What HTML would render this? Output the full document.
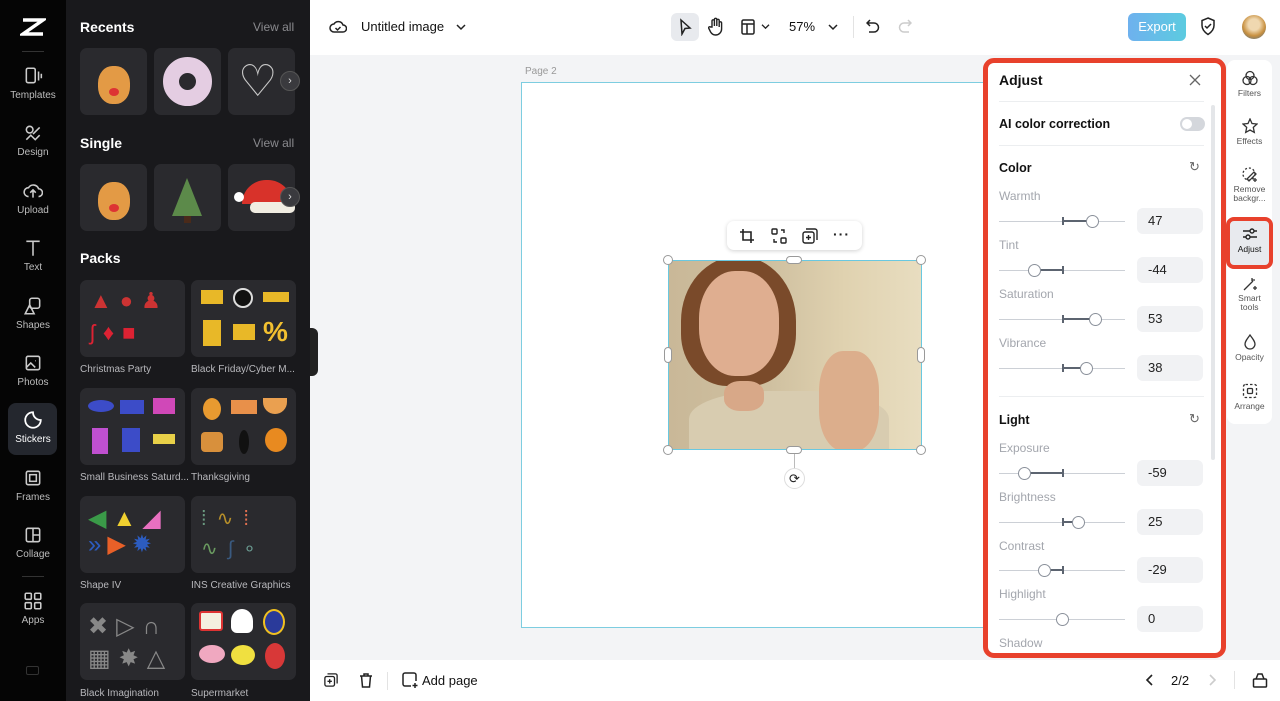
<!DOCTYPE html>
<html><head><meta charset="utf-8"><style>
*{box-sizing:border-box;margin:0;padding:0}
body{width:1280px;height:701px;overflow:hidden;font-family:"Liberation Sans",sans-serif;background:#f3f4f6;position:relative}
.a{position:absolute}
.nav{left:0;top:0;width:66px;height:701px;background:#050505}
.ni{position:absolute;left:0;width:66px;text-align:center;color:#bdbdbd;font-size:10px}
.ni svg{display:block;margin:0 auto 4px;width:20px;height:20px}
.panel{left:66px;top:0;width:244px;height:701px;background:#19191c}
.h{color:#fff;font-weight:bold;font-size:14px}
.va{color:#8a8a8e;font-size:12px}
.tile{position:absolute;background:#2a2a2e;border-radius:7px}
.pk{position:absolute;background:#2a2a2e;border-radius:7px;width:105px;height:77px}
.pl{position:absolute;color:#b8b8bc;font-size:10px}
.arr{position:absolute;width:20px;height:20px;border-radius:50%;background:#3a3a3e;border:1px solid #555;color:#ddd;font-size:11px;text-align:center;line-height:18px}
.top{left:310px;top:0;width:970px;height:55px;background:#fff}
.bot{left:310px;top:660px;width:970px;height:41px;background:#fff}
.lab{position:absolute;left:999px;color:#a3a6ad;font-size:12px}
.trk{position:absolute;left:999px;width:126px;height:1px;background:#ccd0d6}
.tk{position:absolute;left:1062px;width:1.5px;height:8px;background:#5c6470}
.fill{position:absolute;height:2px;background:#5c6470}
.th{position:absolute;width:13px;height:13px;border-radius:50%;background:#fff;border:1px solid #8a909a}
.vb{position:absolute;left:1137px;width:66px;height:26px;border-radius:6px;background:#f1f2f4;font-size:13px;color:#222;padding-left:11px;line-height:26px}
.sec{position:absolute;left:999px;font-size:12.5px;font-weight:bold;color:#111}
.rt{position:absolute;left:1227px;width:45px;text-align:center;font-size:8.5px;color:#555}
.rt svg{display:block;margin:0 auto 2px}
.hd{position:absolute;width:10px;height:10px;border-radius:50%;background:#fff;border:1px solid #999}
</style></head><body>

<div class="a nav">
 <svg class="a" style="left:20px;top:17px" width="26" height="20" viewBox="0 0 26 20"><path d="M3 3h20L3 17h20" stroke="#fff" stroke-width="3.5" fill="none"/></svg>
 <div class="a" style="left:22px;top:51px;width:22px;height:1px;background:#333"></div>
 <div class="ni" style="top:66px"><svg viewBox="0 0 18 18" fill="none" stroke="#ccc" stroke-width="1.4"><rect x="3" y="2" width="8" height="13" rx="1.5"/><path d="M14 5v8M16.5 7v4"/></svg>Templates</div>
 <div class="ni" style="top:123px"><svg viewBox="0 0 18 18" fill="none" stroke="#ccc" stroke-width="1.4"><circle cx="6" cy="6" r="3"/><path d="M9 10l6-6M3 15l4-4 4 4 4-4"/></svg>Design</div>
 <div class="ni" style="top:181px"><svg viewBox="0 0 18 18" fill="none" stroke="#ccc" stroke-width="1.4"><path d="M5 14a4 4 0 010-8 5 5 0 019 1 3.5 3.5 0 010 7M9 15V8M6.5 10.5L9 8l2.5 2.5"/></svg>Upload</div>
 <div class="ni" style="top:238px"><svg viewBox="0 0 18 18" fill="none" stroke="#ccc" stroke-width="1.4"><path d="M3 3h12M9 3v13"/></svg>Text</div>
 <div class="ni" style="top:296px"><svg viewBox="0 0 18 18" fill="none" stroke="#ccc" stroke-width="1.4"><rect x="6" y="2" width="9" height="9" rx="2"/><path d="M6 8l-4 8h8z"/></svg>Shapes</div>
 <div class="ni" style="top:353px"><svg viewBox="0 0 18 18" fill="none" stroke="#ccc" stroke-width="1.4"><rect x="3" y="3" width="12" height="12" rx="1.5"/><path d="M3 13l4-4 4 4M11 7h.5"/></svg>Photos</div>
 <div class="a" style="left:8px;top:403px;width:49px;height:52px;border-radius:8px;background:#24272e"></div>
 <div class="ni" style="top:410px;color:#fff"><svg viewBox="0 0 18 18" fill="none" stroke="#fff" stroke-width="1.6"><path d="M16 9a7 7 0 11-7-7c0 4 3 7 7 7z"/></svg>Stickers</div>
 <div class="ni" style="top:468px"><svg viewBox="0 0 18 18" fill="none" stroke="#ccc" stroke-width="1.4"><rect x="3" y="3" width="12" height="12" rx="1.5"/><rect x="6" y="6" width="6" height="6"/></svg>Frames</div>
 <div class="ni" style="top:525px"><svg viewBox="0 0 18 18" fill="none" stroke="#ccc" stroke-width="1.4"><rect x="3" y="3" width="12" height="12" rx="1.5"/><path d="M9 3v12M9 9h6"/></svg>Collage</div>
 <div class="a" style="left:22px;top:576px;width:22px;height:1px;background:#333"></div>
 <div class="ni" style="top:591px"><svg viewBox="0 0 18 18" fill="none" stroke="#ccc" stroke-width="1.4"><rect x="2" y="2" width="5.5" height="5.5" rx="1"/><rect x="10.5" y="2" width="5.5" height="5.5" rx="1"/><rect x="2" y="10.5" width="5.5" height="5.5" rx="1"/><rect x="10.5" y="10.5" width="5.5" height="5.5" rx="1"/></svg>Apps</div>
 <div class="a" style="left:26px;top:666px;width:13px;height:9px;border:1px solid #333;border-radius:2px"></div>
</div>

<div class="a panel">
 <div class="a h" style="left:14px;top:19px">Recents</div><div class="a va" style="left:187px;top:20px">View all</div>
 <div class="tile" style="left:14px;top:48px;width:67px;height:67px"><div style="position:absolute;left:18px;top:18px;width:32px;height:38px;border-radius:45%;background:#e39a45"></div><div style="position:absolute;left:29px;top:40px;width:10px;height:8px;border-radius:50%;background:#d33"></div></div>
 <div class="tile" style="left:88px;top:48px;width:67px;height:67px"><div style="position:absolute;left:9px;top:9px;width:49px;height:49px;border-radius:50%;border:16px solid #e4cde2"></div></div>
 <div class="tile" style="left:162px;top:48px;width:67px;height:67px;overflow:hidden"><div style="position:absolute;left:10px;top:12px;font-size:44px;color:#c8c8c8;line-height:44px">♡</div></div>
 <div class="arr" style="left:214px;top:71px">›</div>
 <div class="a h" style="left:14px;top:135px">Single</div><div class="a va" style="left:187px;top:136px">View all</div>
 <div class="tile" style="left:14px;top:164px;width:67px;height:67px"><div style="position:absolute;left:18px;top:18px;width:32px;height:38px;border-radius:45%;background:#e39a45"></div><div style="position:absolute;left:29px;top:40px;width:10px;height:8px;border-radius:50%;background:#d33"></div></div>
 <div class="tile" style="left:88px;top:164px;width:67px;height:67px"><div style="position:absolute;left:18px;top:14px;width:0;height:0;border-left:15px solid transparent;border-right:15px solid transparent;border-bottom:38px solid #5c8a4a"></div><div style="position:absolute;left:30px;top:52px;width:7px;height:7px;background:#4a2a1a"></div></div>
 <div class="tile" style="left:162px;top:164px;width:67px;height:67px;overflow:hidden"><div style="position:absolute;left:14px;top:16px;width:50px;height:24px;border-radius:25px 25px 0 0;background:#d8322a"></div><div style="position:absolute;left:22px;top:38px;width:45px;height:11px;border-radius:5px;background:#f1ede2"></div><div style="position:absolute;left:6px;top:28px;width:10px;height:10px;border-radius:50%;background:#fff"></div></div>
 <div class="arr" style="left:214px;top:187px">›</div>
 <div class="a h" style="left:14px;top:250px">Packs</div>
 <div class="pk" style="left:14px;top:280px"><div style="position:absolute;left:10px;top:8px;font-size:22px;letter-spacing:8px;color:#c33">▲●♟</div><div style="position:absolute;left:10px;top:40px;font-size:22px;letter-spacing:8px;color:#d23">ʃ♦■</div></div>
 <div class="pl" style="left:14px;top:364px">Christmas Party</div>
 <div class="pk" style="left:125px;top:280px"><div style="position:absolute;left:10px;top:10px;width:22px;height:14px;background:#e8b828"></div><div style="position:absolute;left:42px;top:8px;width:20px;height:20px;border-radius:50%;background:#111;border:2px solid #ddd"></div><div style="position:absolute;left:72px;top:12px;width:26px;height:10px;background:#e8b828"></div><div style="position:absolute;left:12px;top:40px;width:18px;height:26px;background:#e8b828"></div><div style="position:absolute;left:42px;top:44px;width:22px;height:16px;background:#e8b828"></div><div style="position:absolute;left:72px;top:36px;font-size:28px;color:#f2c030;font-weight:bold">%</div></div>
 <div class="pl" style="left:125px;top:364px">Black Friday/Cyber M...</div>
 <div class="pk" style="left:14px;top:388px"><div style="position:absolute;left:8px;top:12px;width:26px;height:12px;border-radius:50%;background:#3c4cc8"></div><div style="position:absolute;left:40px;top:12px;width:24px;height:14px;background:#3c4cc8"></div><div style="position:absolute;left:73px;top:10px;width:22px;height:16px;background:#d048b8"></div><div style="position:absolute;left:12px;top:40px;width:16px;height:26px;background:#c050d0"></div><div style="position:absolute;left:42px;top:40px;width:18px;height:24px;background:#3c4cc8"></div><div style="position:absolute;left:73px;top:46px;width:22px;height:10px;background:#e8d048"></div></div>
 <div class="pl" style="left:14px;top:472px">Small Business Saturd...</div>
 <div class="pk" style="left:125px;top:388px"><div style="position:absolute;left:12px;top:10px;width:18px;height:22px;border-radius:50%;background:#e89a30"></div><div style="position:absolute;left:40px;top:12px;width:26px;height:14px;background:#e8904a"></div><div style="position:absolute;left:72px;top:10px;width:24px;height:16px;border-radius:0 0 12px 12px;background:#eaa050"></div><div style="position:absolute;left:10px;top:44px;width:22px;height:20px;border-radius:4px;background:#d8903c"></div><div style="position:absolute;left:48px;top:42px;width:10px;height:24px;border-radius:50%;background:#111"></div><div style="position:absolute;left:74px;top:40px;width:22px;height:24px;border-radius:50%;background:#e88a20"></div></div>
 <div class="pl" style="left:125px;top:472px">Thanksgiving</div>
 <div class="pk" style="left:14px;top:496px"><div style="position:absolute;left:8px;top:10px;font-size:24px;letter-spacing:6px;line-height:26px"><span style="color:#3a9a48">◀</span><span style="color:#f0d030">▲</span><span style="color:#e870c0">◢</span><br><span style="color:#2c5cc0">»</span><span style="color:#e86028">▶</span><span style="color:#2c5cc0">✹</span></div></div>
 <div class="pl" style="left:14px;top:580px">Shape IV</div>
 <div class="pk" style="left:125px;top:496px"><div style="position:absolute;left:10px;top:8px;font-size:20px;letter-spacing:10px;line-height:30px"><span style="color:#6a9a80">⁞</span><span style="color:#b8902a">∿</span><span style="color:#e07050">⁞</span><br><span style="color:#6a9a60">∿</span><span style="color:#3a5a80">∫</span><span style="color:#6a9a90">∘</span></div></div>
 <div class="pl" style="left:125px;top:580px">INS Creative Graphics</div>
 <div class="pk" style="left:14px;top:603px"><div style="position:absolute;left:8px;top:8px;font-size:24px;letter-spacing:8px;line-height:32px;color:#888">✖▷∩<br>▦✸△</div></div>
 <div class="pl" style="left:14px;top:688px">Black Imagination</div>
 <div class="pk" style="left:125px;top:603px"><div style="position:absolute;left:8px;top:8px;width:24px;height:20px;border-radius:3px;background:#f4f0e0;border:2px solid #d33"></div><div style="position:absolute;left:40px;top:6px;width:22px;height:24px;border-radius:50% 50% 6px 6px;background:#fff"></div><div style="position:absolute;left:72px;top:6px;width:22px;height:26px;border-radius:50%;background:#2a3a9a;border:2px solid #f0c020"></div><div style="position:absolute;left:8px;top:42px;width:26px;height:18px;border-radius:50%;background:#f0a8c0"></div><div style="position:absolute;left:40px;top:42px;width:24px;height:20px;border-radius:50%;background:#f0e040"></div><div style="position:absolute;left:74px;top:40px;width:20px;height:26px;border-radius:50%;background:#d83838"></div></div>
 <div class="pl" style="left:125px;top:688px">Supermarket</div>
</div>
<div class="a" style="left:310px;top:328px;width:8px;height:48px;background:#222;border-radius:0 6px 6px 0"></div>

<div class="a top">
 <svg class="a" style="left:19px;top:18px" width="18" height="18" viewBox="0 0 18 18" fill="none" stroke="#222" stroke-width="1.5"><path d="M5 14a4 4 0 010-8 5 5 0 019 1 3.5 3.5 0 010 7z"/><path d="M6.5 10l2 2 3-3"/></svg>
 <div class="a" style="left:51px;top:19px;font-size:13px;color:#111">Untitled image</div>
 <svg class="a" style="left:146px;top:23px" width="10" height="8" viewBox="0 0 10 8" fill="none" stroke="#222" stroke-width="1.5"><path d="M1 2l4 4 4-4"/></svg>
 <div class="a" style="left:361px;top:13px;width:28px;height:28px;border-radius:6px;background:#e8eaee"></div>
 <svg class="a" style="left:367px;top:18px" width="16" height="18" viewBox="0 0 16 18" fill="none" stroke="#222" stroke-width="1.5"><path d="M4 2l9 8-5 .5L5 16z"/></svg>
 <svg class="a" style="left:398px;top:17px" width="16" height="19" viewBox="0 0 16 19" fill="none" stroke="#222" stroke-width="1.4"><path d="M4 10V4a1.2 1.2 0 012.4 0v5V2.5a1.2 1.2 0 012.4 0V9V3.5a1.2 1.2 0 012.4 0V10V6a1.2 1.2 0 012.4 0v6a6 6 0 01-6 6 6 6 0 01-5-3l-2-4a1.2 1.2 0 012-1z"/></svg>
 <svg class="a" style="left:431px;top:19px" width="14" height="16" viewBox="0 0 14 16" fill="none" stroke="#222" stroke-width="1.5"><rect x="1" y="1" width="12" height="14" rx="1.5"/><path d="M1 5h12M6 5v10"/></svg>
 <svg class="a" style="left:451px;top:23px" width="9" height="7" viewBox="0 0 10 8" fill="none" stroke="#222" stroke-width="1.5"><path d="M1 2l4 4 4-4"/></svg>
 <div class="a" style="left:479px;top:19px;font-size:13px;color:#111">57%</div>
 <svg class="a" style="left:518px;top:23px" width="10" height="8" viewBox="0 0 10 8" fill="none" stroke="#222" stroke-width="1.5"><path d="M1 2l4 4 4-4"/></svg>
 <div class="a" style="left:543px;top:16px;width:1px;height:22px;background:#e3e3e3"></div>
 <svg class="a" style="left:556px;top:18px" width="14" height="16" viewBox="0 0 14 16" fill="none" stroke="#222" stroke-width="1.5"><path d="M4 2L1 5l3 3M1 5h7a4.5 4.5 0 010 9H3"/></svg>
 <svg class="a" style="left:588px;top:18px" width="14" height="16" viewBox="0 0 14 16" fill="none" stroke="#ccc" stroke-width="1.5"><path d="M10 2l3 3-3 3M13 5H6a4.5 4.5 0 000 9h5"/></svg>
 <div class="a" style="left:818px;top:13px;width:58px;height:28px;border-radius:6px;background:linear-gradient(90deg,#6eb1ee,#5ccbe0);color:#fff;font-size:13px;text-align:center;line-height:28px">Export</div>
 <svg class="a" style="left:890px;top:17px" width="16" height="19" viewBox="0 0 16 19" fill="none" stroke="#222" stroke-width="1.5"><path d="M8 1l6 2.5v5c0 4-3 7-6 9-3-2-6-5-6-9v-5z"/><path d="M5 9l2 2 4-4"/></svg>
 <div class="a" style="left:932px;top:15px;width:24px;height:24px;border-radius:50%;background:radial-gradient(circle at 50% 40%,#f0d8b0 30%,#c89040 60%,#3a6a9a)"></div>
</div>

<div class="a" style="left:525px;top:66px;font-size:10px;color:#999">Page 2</div>
<div class="a" style="left:521px;top:82px;width:470px;height:546px;background:#fff;border:1.5px solid #7dcde0"></div>

<div class="a" style="left:727px;top:221px;width:135px;height:29px;background:#fff;border-radius:7px;box-shadow:0 1px 4px rgba(0,0,0,.18)"></div>
<svg class="a" style="left:739px;top:228px" width="16" height="16" viewBox="0 0 16 16" fill="none" stroke="#222" stroke-width="1.6"><path d="M4 1v11h11M1 4h11v11"/></svg>
<svg class="a" style="left:771px;top:228px" width="16" height="16" viewBox="0 0 16 16" fill="none" stroke="#222" stroke-width="1.4"><rect x="1" y="1" width="5" height="5" rx="1"/><rect x="10" y="10" width="5" height="5" rx="1"/><path d="M10 2h3v3M6 14H3v-3"/></svg>
<svg class="a" style="left:802px;top:228px" width="16" height="16" viewBox="0 0 16 16" fill="none" stroke="#222" stroke-width="1.4"><rect x="1" y="4" width="11" height="11" rx="2"/><path d="M4 1h9a2 2 0 012 2v9M6.5 7v5M4 9.5h5"/></svg>
<div class="a" style="left:833px;top:226px;font-size:14px;font-weight:bold;color:#222;letter-spacing:1px">···</div>

<div class="a" style="left:668px;top:260px;width:254px;height:190px;background:linear-gradient(90deg,#c9b898 0%,#cfc0a0 40%,#e0d2b0 70%,#e8ddc0 100%);overflow:hidden;border:1.5px solid #6ac8e0">
 <div style="position:absolute;left:12px;top:-5px;width:115px;height:130px;border-radius:50% 50% 40% 40%;background:#7a4a2a"></div>
 <div style="position:absolute;left:30px;top:10px;width:80px;height:105px;border-radius:45%;background:#dfae90"></div>
 <div style="position:absolute;left:20px;top:130px;width:200px;height:70px;border-radius:40% 40% 0 0;background:#d8ccb0"></div>
 <div style="position:absolute;left:150px;top:90px;width:60px;height:100px;border-radius:40%;background:#dcae8c"></div>
 <div style="position:absolute;left:55px;top:120px;width:40px;height:30px;background:#d8a888;border-radius:40%"></div>
</div>
<div class="hd" style="left:663px;top:255px"></div><div class="hd" style="left:916px;top:255px"></div>
<div class="hd" style="left:663px;top:445px"></div><div class="hd" style="left:916px;top:445px"></div>
<div class="a" style="left:786px;top:256px;width:16px;height:8px;border-radius:4px;background:#fff;border:1px solid #999"></div>
<div class="a" style="left:786px;top:446px;width:16px;height:8px;border-radius:4px;background:#fff;border:1px solid #999"></div>
<div class="a" style="left:664px;top:347px;width:8px;height:16px;border-radius:4px;background:#fff;border:1px solid #999"></div>
<div class="a" style="left:917px;top:347px;width:8px;height:16px;border-radius:4px;background:#fff;border:1px solid #999"></div>
<div class="a" style="left:794px;top:454px;width:1px;height:14px;background:#bbb"></div>
<div class="a" style="left:784px;top:468px;width:21px;height:21px;border-radius:50%;background:#fff;border:1px solid #ddd;font-size:13px;text-align:center;line-height:19px;color:#222">⟳</div>

<div class="a" style="left:1227px;top:60px;width:45px;height:364px;background:#fff;border-radius:8px"></div>
<div class="rt" style="top:70px"><svg width="16" height="16" viewBox="0 0 16 16" fill="none" stroke="#333" stroke-width="1.3"><circle cx="8" cy="5.5" r="4"/><circle cx="5" cy="10.5" r="4"/><circle cx="11" cy="10.5" r="4"/></svg>Filters</div>
<div class="rt" style="top:118px"><svg width="16" height="16" viewBox="0 0 16 16" fill="none" stroke="#333" stroke-width="1.3"><path d="M8 1l2 4.5 5 .5-3.7 3.4 1 5L8 12l-4.3 2.4 1-5L1 6l5-.5z"/></svg>Effects</div>
<div class="rt" style="top:167px;line-height:9px"><svg width="16" height="16" viewBox="0 0 16 16" fill="none" stroke="#333" stroke-width="1.3"><circle cx="7" cy="7" r="6" stroke-dasharray="2 2"/><path d="M5 12l7-7 2 2-7 7zM13 11v4M11 13h4"/></svg>Remove<br>backgr...</div>
<div class="a" style="left:1226px;top:217px;width:47px;height:52px;border:4px solid #e8412c;border-radius:8px;background:#e8eaee"></div>
<div class="rt" style="top:226px;color:#111"><svg width="16" height="16" viewBox="0 0 16 16" fill="none" stroke="#222" stroke-width="1.4"><path d="M1 5h14M1 11h14"/><circle cx="10" cy="5" r="2" fill="#e8eaee"/><circle cx="6" cy="11" r="2" fill="#e8eaee"/></svg>Adjust</div>
<div class="rt" style="top:276px;line-height:9px"><svg width="16" height="16" viewBox="0 0 16 16" fill="none" stroke="#333" stroke-width="1.3"><path d="M2 14L11 5M10 2v3M13 4h-3M13 10v4M11 12h4"/></svg>Smart<br>tools</div>
<div class="rt" style="top:334px"><svg width="16" height="16" viewBox="0 0 16 16" fill="none" stroke="#333" stroke-width="1.3"><path d="M8 1c3 4 5 6.5 5 9a5 5 0 01-10 0c0-2.5 2-5 5-9z"/></svg>Opacity</div>
<div class="rt" style="top:383px"><svg width="16" height="16" viewBox="0 0 16 16" fill="none" stroke="#333" stroke-width="1.3"><rect x="1.5" y="1.5" width="13" height="13" rx="2" stroke-dasharray="2.5 2"/><rect x="5.5" y="5.5" width="5" height="5" rx="1"/></svg>Arrange</div>

<div class="a" style="left:983px;top:58px;width:243px;height:600px;border:5px solid #e8412c;border-radius:11px;background:#fff"></div>
<div class="a" style="left:999px;top:72px;font-size:14px;font-weight:bold;color:#111">Adjust</div>
<svg class="a" style="left:1189px;top:74px" width="12" height="12" viewBox="0 0 12 12" stroke="#666" stroke-width="1.3"><path d="M1 1l10 10M11 1L1 11"/></svg>
<div class="a" style="left:999px;top:101px;width:205px;height:1px;background:#eceef0"></div>
<div class="a" style="left:1211px;top:105px;width:4px;height:355px;border-radius:2px;background:#e4e6e9"></div>
<div class="sec" style="top:117px">AI color correction</div>
<div class="a" style="left:1180px;top:117px;width:25px;height:14px;border-radius:7px;background:#d4d7dc"></div>
<div class="a" style="left:1182px;top:119px;width:10px;height:10px;border-radius:50%;background:#fff"></div>
<div class="a" style="left:999px;top:145px;width:205px;height:1px;background:#eceef0"></div>
<div class="sec" style="top:161px">Color</div>
<div class="a" style="left:1189px;top:159px;font-size:13px;color:#666">↻</div>
<div class="a" style="left:999px;top:396px;width:205px;height:1px;background:#eceef0"></div>
<div class="sec" style="top:413px">Light</div>
<div class="a" style="left:1189px;top:411px;font-size:13px;color:#666">↻</div>

<div class="lab" style="top:189px">Warmth</div>
<div class="trk" style="top:221px"></div><div class="tk" style="top:217px"></div><div class="fill" style="left:1062px;width:30px;top:220px"></div><div class="th" style="left:1086px;top:215px"></div><div class="vb" style="top:208px">47</div>
<div class="lab" style="top:238px">Tint</div>
<div class="trk" style="top:270px"></div><div class="tk" style="top:266px"></div><div class="fill" style="left:1034px;width:28px;top:269px"></div><div class="th" style="left:1028px;top:264px"></div><div class="vb" style="top:257px">-44</div>
<div class="lab" style="top:287px">Saturation</div>
<div class="trk" style="top:319px"></div><div class="tk" style="top:315px"></div><div class="fill" style="left:1062px;width:33px;top:318px"></div><div class="th" style="left:1089px;top:313px"></div><div class="vb" style="top:306px">53</div>
<div class="lab" style="top:336px">Vibrance</div>
<div class="trk" style="top:368px"></div><div class="tk" style="top:364px"></div><div class="fill" style="left:1062px;width:24px;top:367px"></div><div class="th" style="left:1080px;top:362px"></div><div class="vb" style="top:355px">38</div>

<div class="lab" style="top:441px">Exposure</div>
<div class="trk" style="top:473px"></div><div class="tk" style="top:469px"></div><div class="fill" style="left:1024px;width:38px;top:472px"></div><div class="th" style="left:1018px;top:467px"></div><div class="vb" style="top:460px">-59</div>
<div class="lab" style="top:490px">Brightness</div>
<div class="trk" style="top:522px"></div><div class="tk" style="top:518px"></div><div class="fill" style="left:1062px;width:16px;top:521px"></div><div class="th" style="left:1072px;top:516px"></div><div class="vb" style="top:509px">25</div>
<div class="lab" style="top:539px">Contrast</div>
<div class="trk" style="top:570px"></div><div class="tk" style="top:566px"></div><div class="fill" style="left:1044px;width:18px;top:569px"></div><div class="th" style="left:1038px;top:564px"></div><div class="vb" style="top:557px">-29</div>
<div class="lab" style="top:587px">Highlight</div>
<div class="trk" style="top:619px"></div><div class="th" style="left:1056px;top:613px"></div><div class="vb" style="top:606px">0</div>
<div class="lab" style="top:636px">Shadow</div>

<div class="a bot">
 <svg class="a" style="left:14px;top:13px" width="14" height="14" viewBox="0 0 16 16" fill="none" stroke="#222" stroke-width="1.5"><rect x="1" y="4" width="11" height="11" rx="2"/><path d="M4 1h9a2 2 0 012 2v9M6.5 7v5M4 9.5h5"/></svg>
 <svg class="a" style="left:49px;top:13px" width="14" height="15" viewBox="0 0 14 15" fill="none" stroke="#222" stroke-width="1.5"><path d="M1 3h12M5 3V1h4v2M2.5 3l1 11h7l1-11"/></svg>
 <div class="a" style="left:77px;top:12px;width:1px;height:18px;background:#e3e3e3"></div>
 <svg class="a" style="left:92px;top:12px" width="16" height="16" viewBox="0 0 16 16" fill="none" stroke="#222" stroke-width="1.5"><path d="M9 14H3a2 2 0 01-2-2V3a2 2 0 012-2h9a2 2 0 012 2v6M13 11v5M10.5 13.5h5"/></svg>
 <div class="a" style="left:112px;top:13px;font-size:13px;color:#111">Add page</div>
 <svg class="a" style="left:835px;top:14px" width="8" height="12" viewBox="0 0 8 12" fill="none" stroke="#222" stroke-width="1.6"><path d="M7 1L2 6l5 5"/></svg>
 <div class="a" style="left:861px;top:13px;font-size:13px;color:#111">2/2</div>
 <svg class="a" style="left:899px;top:14px" width="8" height="12" viewBox="0 0 8 12" fill="none" stroke="#ccc" stroke-width="1.6"><path d="M1 1l5 5-5 5"/></svg>
 <div class="a" style="left:924px;top:11px;width:1px;height:18px;background:#e3e3e3"></div>
 <svg class="a" style="left:942px;top:12px" width="16" height="16" viewBox="0 0 16 16" fill="none" stroke="#222" stroke-width="1.5"><rect x="1.5" y="7" width="13" height="8" rx="1"/><path d="M4 7l2-5h4l2 5"/></svg>
</div>
</body></html>
